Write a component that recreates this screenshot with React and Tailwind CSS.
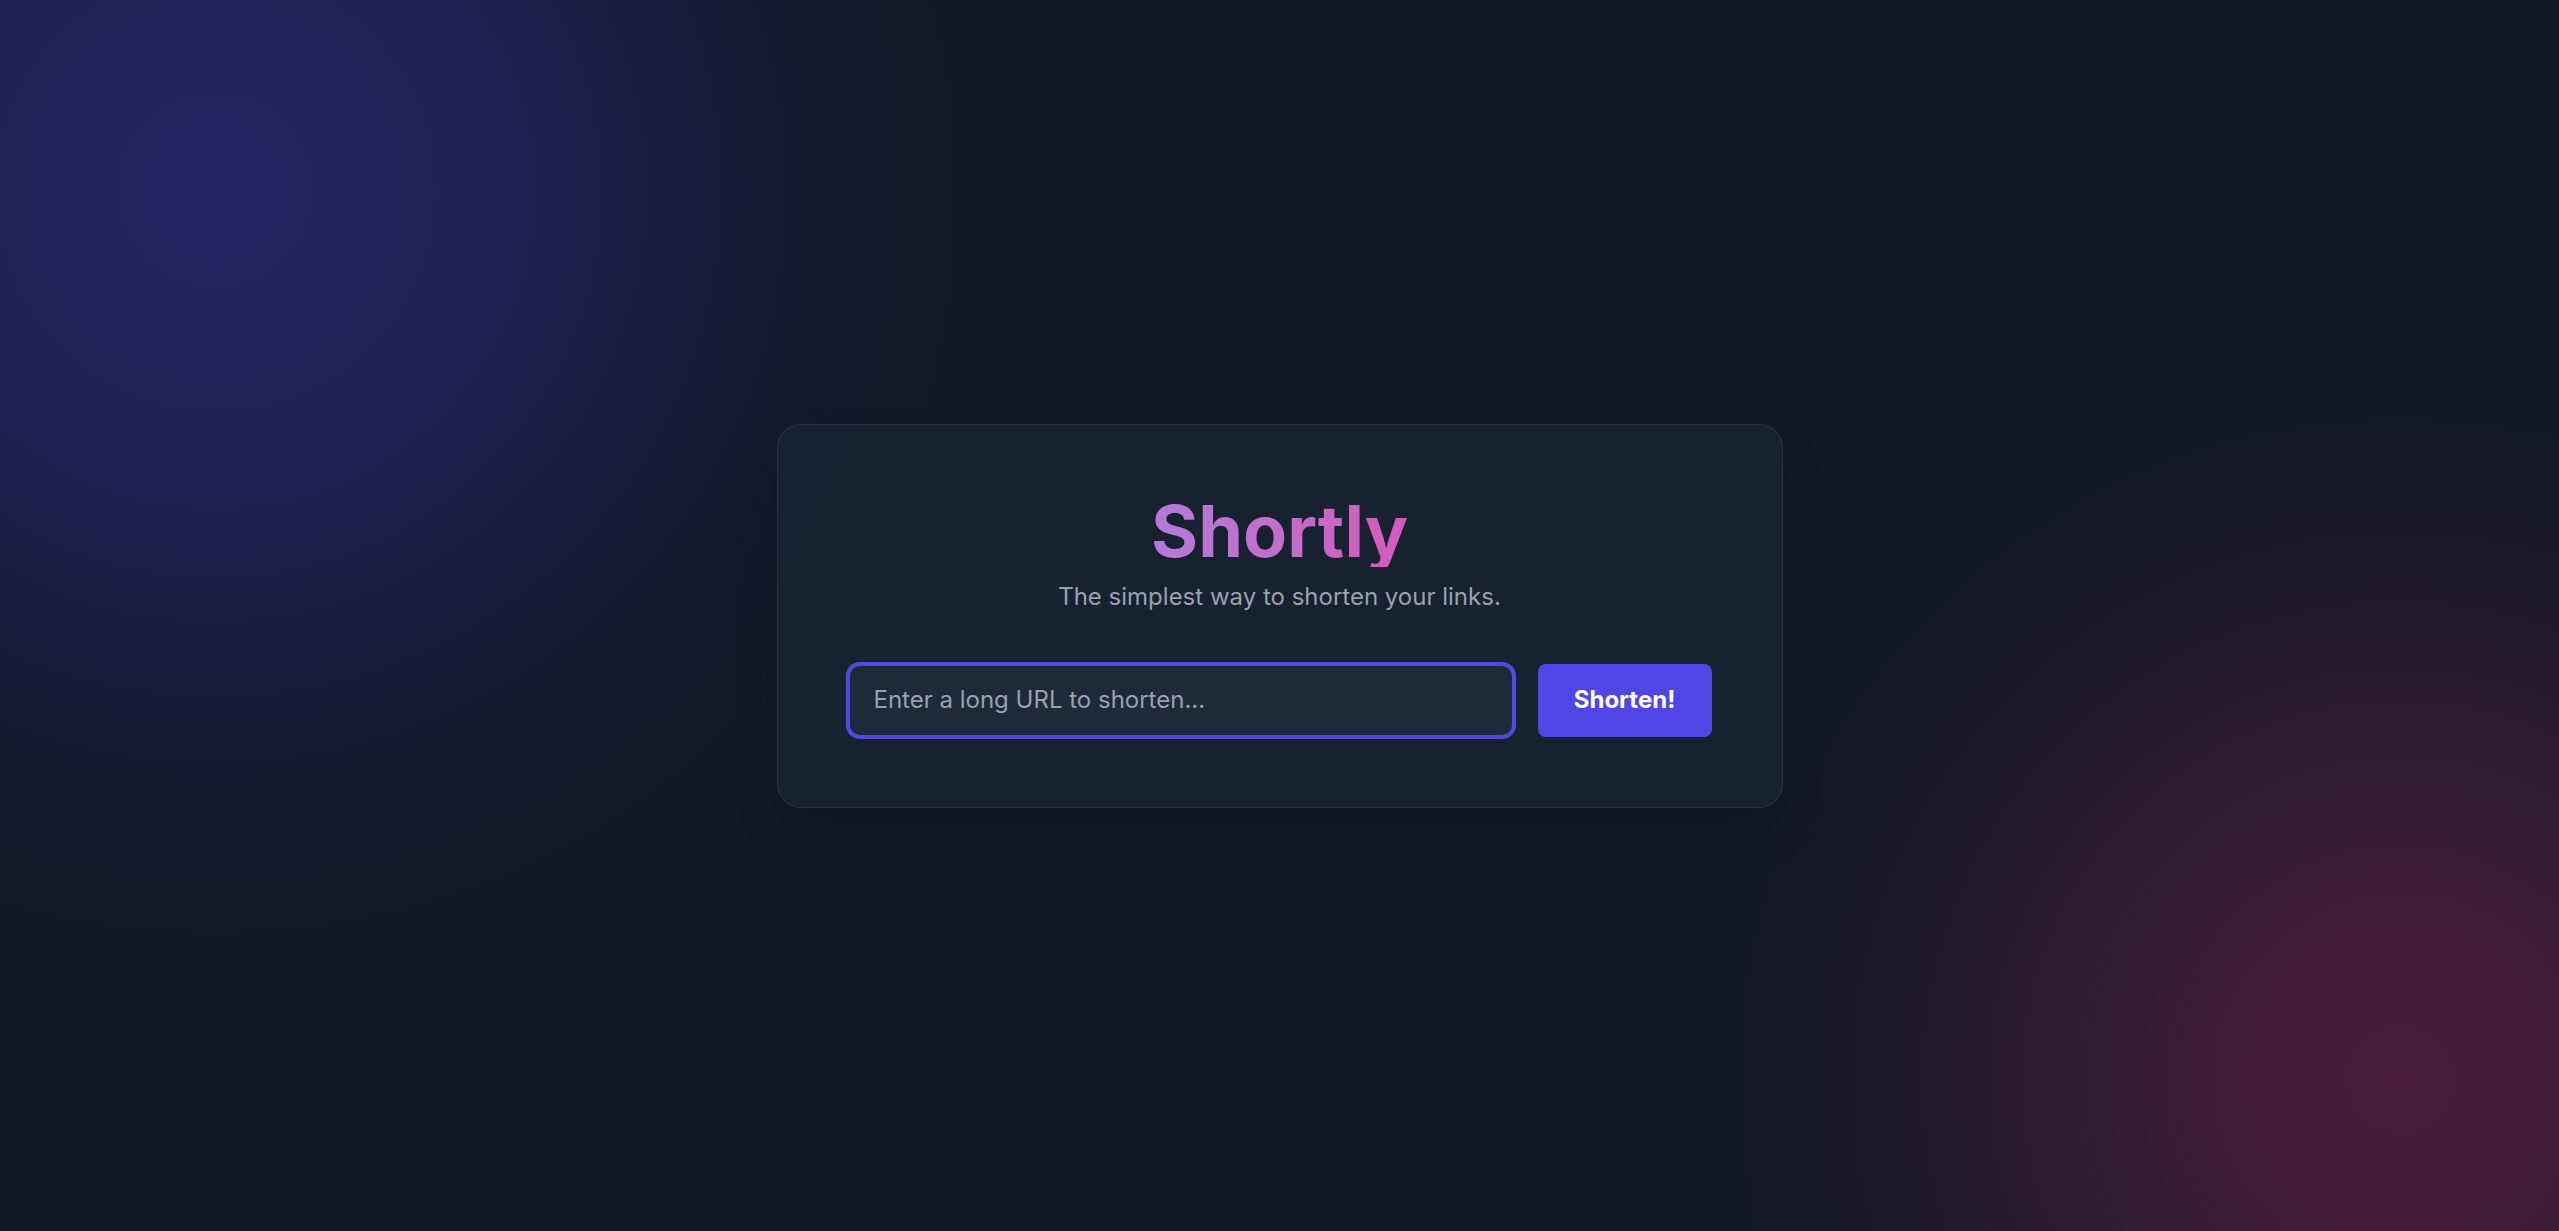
import React from "react";

export default function App() {
  return (
    <div
      className="min-h-screen w-full flex items-center justify-center bg-[#111827] bg-[radial-gradient(circle_at_215px_190px,rgba(67,56,202,0.37)_0px,rgba(67,56,202,0.31)_200px,rgba(67,56,202,0.16)_420px,rgba(67,56,202,0.05)_600px,rgba(67,56,202,0)_760px),radial-gradient(circle_at_2400px_1080px,rgba(219,39,119,0.28)_0px,rgba(219,39,119,0.23)_180px,rgba(219,39,119,0.1)_420px,rgba(219,39,119,0.03)_580px,rgba(219,39,119,0)_700px)]"
      style={{ fontFamily: "Inter, 'Noto Sans', sans-serif" }}
    >
      <div className="w-[1006px] rounded-3xl border border-gray-700/50 bg-gray-800/50 p-[70px] shadow-2xl">
        <div className="flex flex-col items-center">
          <h1 className="text-7xl font-bold bg-gradient-to-r from-[#b27bd9] to-[#d35bbd] bg-clip-text text-transparent leading-none">
            Shortly
          </h1>
          <p className="mt-[14px] text-2xl text-gray-400">
            The simplest way to shorten your links.
          </p>
        </div>
        <form
          className="mt-[51px] flex gap-6"
          onSubmit={(e) => e.preventDefault()}
        >
          <input
            autoFocus
            type="text"
            placeholder="Enter a long URL to shorten..."
            className="flex-1 rounded-xl border-2 border-[#5249e0] bg-gray-800 px-6 py-[18.5px] text-2xl text-white placeholder-gray-400 caret-white outline-none ring-2 ring-[#5249e0]"
          />
          <button
            type="submit"
            className="w-[174px] rounded-lg bg-[#4f46e5] text-2xl font-bold text-white"
          >
            Shorten!
          </button>
        </form>
      </div>
    </div>
  );
}
